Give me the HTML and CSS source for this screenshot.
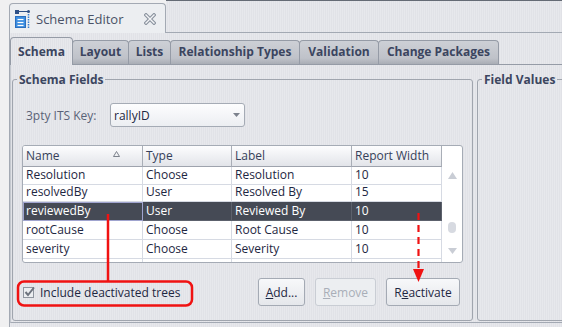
FILE: index.html
```html
<!DOCTYPE html>
<html lang="en">
<head>
    <meta charset="UTF-8">
    <meta name="viewport" content="width=device-width, initial-scale=1.0">
    <title>Schema Editor</title>
    <link rel="stylesheet" href="styles.css">
</head>
<body>
  <div class="window">
    <div class="top-bar">
      <div class="editor-tab">
        <svg class="editor-icon" width="16" height="18" viewBox="0 0 16 18">
          <rect x="0" y="0" width="4" height="4" fill="#2d4f86"/>
          <line x1="4" y1="1.5" x2="13" y2="1.5" stroke="#2d4f86" stroke-width="1"/>
          <circle cx="13.5" cy="1.5" r="1.5" fill="#2d4f86"/>
          <line x1="13.5" y1="4" x2="13.5" y2="18" stroke="#3b7fd0" stroke-width="1.5" stroke-dasharray="1.5 1"/>
          <rect x="0.5" y="6.5" width="10" height="11" fill="#3d8ee0" stroke="#2b6fbf"/>
          <line x1="2.5" y1="9.5" x2="8.5" y2="9.5" stroke="#fff" stroke-width="1.2"/>
          <line x1="2.5" y1="12.5" x2="8.5" y2="12.5" stroke="#fff" stroke-width="1.2"/>
          <line x1="2.5" y1="15.5" x2="8.5" y2="15.5" stroke="#fff" stroke-width="1.2"/>
        </svg>
        <span class="editor-title">Schema Editor</span>
        <svg class="close-icon" width="12" height="12" viewBox="0 0 12 12">
          <path d="M2 2 L10 10 M10 2 L2 10" stroke="#8a929e" stroke-width="3.6" stroke-linecap="square"/>
          <path d="M2 2 L10 10 M10 2 L2 10" stroke="#f4f5f7" stroke-width="1.4" stroke-linecap="square"/>
        </svg>
      </div>
      <div class="editor-fill"></div>
    </div>

    <div class="editor-body">
      <div class="tabs">
        <div class="tab selected tab-schema">Schema</div>
        <div class="tab tab-layout">Layout</div>
        <div class="tab tab-lists">Lists</div>
        <div class="tab tab-rel">Relationship Types</div>
        <div class="tab tab-valid">Validation</div>
        <div class="tab tab-change">Change Packages</div>
      </div>

      <div class="panel">
        <fieldset class="group schema-fields">
          <legend>Schema Fields</legend>

          <div class="key-row">
            <span class="key-label">3pty ITS Key:</span>
            <div class="combo">
              <span>rallyID</span>
              <svg width="7" height="4" viewBox="0 0 7 4"><path d="M0 0 L7 0 L3.5 4 Z" fill="#7c828d"/></svg>
            </div>
          </div>

          <div class="table-wrap">
            <div class="grid">
              <div class="grid-row head">
                <div class="cell">Name
                  <svg class="sort-icon" width="7" height="6" viewBox="0 0 7 6"><path d="M3.5 0.5 L6.5 5.5 L0.5 5.5 Z" fill="none" stroke="#6f7580" stroke-width="0.9"/></svg>
                </div>
                <div class="cell">Type</div>
                <div class="cell">Label</div>
                <div class="cell">Report Width</div>
              </div>
              <div class="grid-body">
                <!-- list is scrolled: the first row shows only its lower part -->
                <div class="grid-row partial">
                  <div class="cell">Resolution</div><div class="cell">Choose</div><div class="cell">Resolution</div><div class="cell">10</div>
                </div>
                <div class="grid-row">
                  <div class="cell">resolvedBy</div><div class="cell">User</div><div class="cell">Resolved By</div><div class="cell">15</div>
                </div>
                <div class="grid-row selected">
                  <div class="cell focus">reviewedBy</div><div class="cell">User</div><div class="cell">Reviewed By</div><div class="cell">10</div>
                </div>
                <div class="grid-row">
                  <div class="cell">rootCause</div><div class="cell">Choose</div><div class="cell">Root Cause</div><div class="cell">10</div>
                </div>
                <div class="grid-row">
                  <div class="cell">severity</div><div class="cell">Choose</div><div class="cell">Severity</div><div class="cell">10</div>
                </div>
                <div class="grid-row">
                  <div class="cell"></div><div class="cell"></div><div class="cell"></div><div class="cell"></div>
                </div>
              </div>
            </div>
            <div class="scrollbar">
              <svg width="9" height="7" viewBox="0 0 9 7"><path d="M4.5 0 L9 7 L0 7 Z" fill="#c9cdd5"/></svg>
              <div class="thumb"></div>
              <svg class="down" width="9" height="6" viewBox="0 0 9 6"><path d="M0 0 L9 0 L4.5 6 Z" fill="#c9cdd5"/></svg>
            </div>
          </div>

          <div class="bottom-row">
            <label class="check">
              <svg width="12" height="12" viewBox="0 0 12 12">
                <rect x="0.5" y="1.5" width="10" height="10" fill="#eceef1" stroke="#8f959f"/>
                <path d="M2.5 6 L5 9 L11 1.5" fill="none" stroke="#6d737e" stroke-width="2"/>
              </svg>
              Include deactivated trees
            </label>
            <div class="buttons">
              <button class="button btn-add" type="button"><u>A</u>dd...</button>
              <button class="button btn-remove" type="button" disabled><u>R</u>emove</button>
              <button class="button btn-react" type="button">R<u>e</u>activate</button>
            </div>
          </div>
        </fieldset>

        <fieldset class="group field-values">
          <legend>Field Values</legend>
        </fieldset>
      </div>
    </div>

    <!-- red call-outs drawn over the dialog -->
    <svg class="callouts" width="562" height="327" viewBox="0 0 562 327">
      <rect x="18" y="281.5" width="174" height="24" rx="6" fill="none" stroke="#f01212" stroke-width="2.5"/>
      <line x1="108" y1="214" x2="108" y2="281" stroke="#f01212" stroke-width="2.5"/>
      <line x1="418.5" y1="213" x2="418.5" y2="270" stroke="#f01212" stroke-width="2.2" stroke-dasharray="7 5"/>
      <path d="M413 269 L424 269 L418.5 282 Z" fill="#f01212"/>
    </svg>
  </div>
</body>
</html>
```

FILE: styles.css
```css
body {
  margin: 0;
  font-family: "Open Sans", sans-serif;
  font-size: 12px;
  color: #1e2742;
}

.window {
  position: relative;
  width: 562px;
  height: 327px;
  overflow: hidden;
  box-sizing: border-box;
  padding-left: 9px;
  background: #f0f0f1;
}

/* editor tab strip */
.top-bar {
  display: flex;
  align-items: flex-end;
  height: 33px;
}

.editor-tab {
  display: flex;
  align-items: center;
  width: 157px;
  height: 30px;
  box-sizing: border-box;
  padding: 0 8px 0 5px;
  border: 1px solid #a3a9b3;
  border-bottom: none;
  border-radius: 4px 4px 0 0;
  background: #eceef1;
}

.editor-icon {
  margin-right: 5px;
  margin-top: 1px;
}

.editor-title {
  font-size: 13px;
  color: #4a5266;
}

.close-icon {
  margin-left: auto;
  margin-right: 1px;
}

.editor-fill {
  flex: 1;
  height: 33px;
  box-sizing: border-box;
  border-top: 1px solid #656b75;
  border-bottom: 1px solid #a3a9b3;
  background: repeating-linear-gradient(90deg, #e7e8ec 0 1px, #e1e2e7 1px 2px);
}

.editor-body {
  height: 294px;
  box-sizing: border-box;
  padding-top: 4px;
  border-left: 1px solid #a3a9b3;
  background: repeating-linear-gradient(90deg, #e7e8ec 0 1px, #e1e2e7 1px 2px);
}

/* inner tabs */
.tabs {
  display: flex;
  align-items: flex-end;
  height: 27px;
  border-bottom: 1px solid #959ba6;
}

.tab {
  height: 24px;
  box-sizing: border-box;
  margin-left: -1px;
  border: 1px solid #959ba6;
  border-bottom: none;
  border-radius: 4px 4px 0 0;
  background: linear-gradient(#cdd0d6, #bfc2c9 75%, #a9adb5);
  font-weight: bold;
  color: #3b4560;
  line-height: 22px;
  text-align: center;
}

.tab.selected {
  height: 28px;
  margin-left: 0;
  margin-bottom: -1px;
  padding-top: 3px;
  background: repeating-linear-gradient(90deg, #e7e8ec 0 1px, #e1e2e7 1px 2px);
}

.tab-schema { width: 63px; }
.tab-layout { width: 57px; }
.tab-lists { width: 43px; }
.tab-rel { width: 130px; }
.tab-valid { width: 80px; }
.tab-change { width: 121px; }

.panel {
  display: flex;
  gap: 4px;
  padding: 6px 0 1px 1px;
  border-left: 1px solid #c4c8cf;
  border-bottom: 1px solid #a3a9b3;
}

.group {
  margin: 0;
  padding: 15px 9px 14px;
  border: 1px solid #a0a5ae;
  border-radius: 3px;
  min-width: 0;
}

.group legend {
  margin-left: -5px;
  padding: 0 2px;
  line-height: 17px;
  font-weight: bold;
  color: #3c4660;
}

.schema-fields {
  width: 461px;
  box-sizing: border-box;
  flex: none;
}

.field-values {
  width: 150px;
  flex: none;
}

/* ITS key */
.key-row {
  display: flex;
  align-items: center;
  margin-left: 4px;
}

.key-label {
  width: 84px;
  color: #5a6277;
}

.combo {
  display: flex;
  align-items: center;
  justify-content: space-between;
  width: 135px;
  height: 24px;
  box-sizing: border-box;
  padding: 0 4px 0 3px;
  border: 1px solid #a5abb5;
  border-radius: 3px;
  background: linear-gradient(#fdfdfe, #eceef2);
}

/* fields table */
.table-wrap {
  display: flex;
  height: 118px;
  box-sizing: border-box;
  margin-top: 18px;
  border: 1px solid #a5abb5;
  border-radius: 3px;
  background: #fff;
  overflow: hidden;
}

.grid {
  display: flex;
  flex-direction: column;
  width: 419px;
}

.grid-row {
  display: grid;
  grid-template-columns: 120px 89px 120px 90px;
  height: 19px;
}

.cell {
  box-sizing: border-box;
  padding-left: 3px;
  border-right: 1px solid #d6dae3;
  border-bottom: 1px solid #d6dae3;
  line-height: 18px;
  white-space: nowrap;
  overflow: hidden;
}

.grid-row.head {
  height: 21px;
}

.head .cell {
  border-right-color: #a9aeb7;
  border-bottom-color: #9ea3ad;
  background: linear-gradient(#fdfdfe, #e2e4e9);
  line-height: 20px;
  color: #363f59;
}

.sort-icon {
  float: right;
  margin: 5px 22px 0 0;
}

.grid-body {
  flex: 1;
  overflow: hidden;
}

.grid-row.partial {
  height: 16px;
}

.partial .cell {
  line-height: 16.5px;
  overflow: visible;
}

.grid-row.selected {
  background: #454a55;
  color: #fff;
}

.selected .cell {
  border-color: #5c616c;
}

.selected .cell.focus {
  outline: 1px solid #a0a4cf;
  outline-offset: -1px;
}

.scrollbar {
  flex: 1;
  display: flex;
  flex-direction: column;
  align-items: center;
  padding-top: 26px;
}

.thumb {
  width: 8px;
  height: 11px;
  margin-top: 43px;
  border-radius: 4px;
  background: #d7dae1;
}

.scrollbar .down {
  margin-top: 15px;
}

/* bottom controls */
.bottom-row {
  display: flex;
  align-items: center;
  height: 28px;
  margin-top: 15px;
}

.check {
  display: flex;
  align-items: center;
  gap: 5px;
  margin-left: 1px;
}

.buttons {
  display: flex;
  gap: 10px;
  margin-left: auto;
  margin-right: 3px;
}

.button {
  height: 28px;
  padding: 0;
  border: 1px solid #a4aab4;
  border-radius: 3px;
  background: linear-gradient(#f7f8fa, #e5e7eb);
  font-family: inherit;
  font-size: 12px;
  color: #1e2742;
}

.button:disabled {
  border-color: #c9cdd4;
  background: #eceef1;
  color: #a9aeb8;
}

.btn-add { width: 47px; }
.btn-remove { width: 61px; }
.btn-react { width: 74px; }

.callouts {
  position: absolute;
  top: 0;
  left: 0;
  pointer-events: none;
}
```
